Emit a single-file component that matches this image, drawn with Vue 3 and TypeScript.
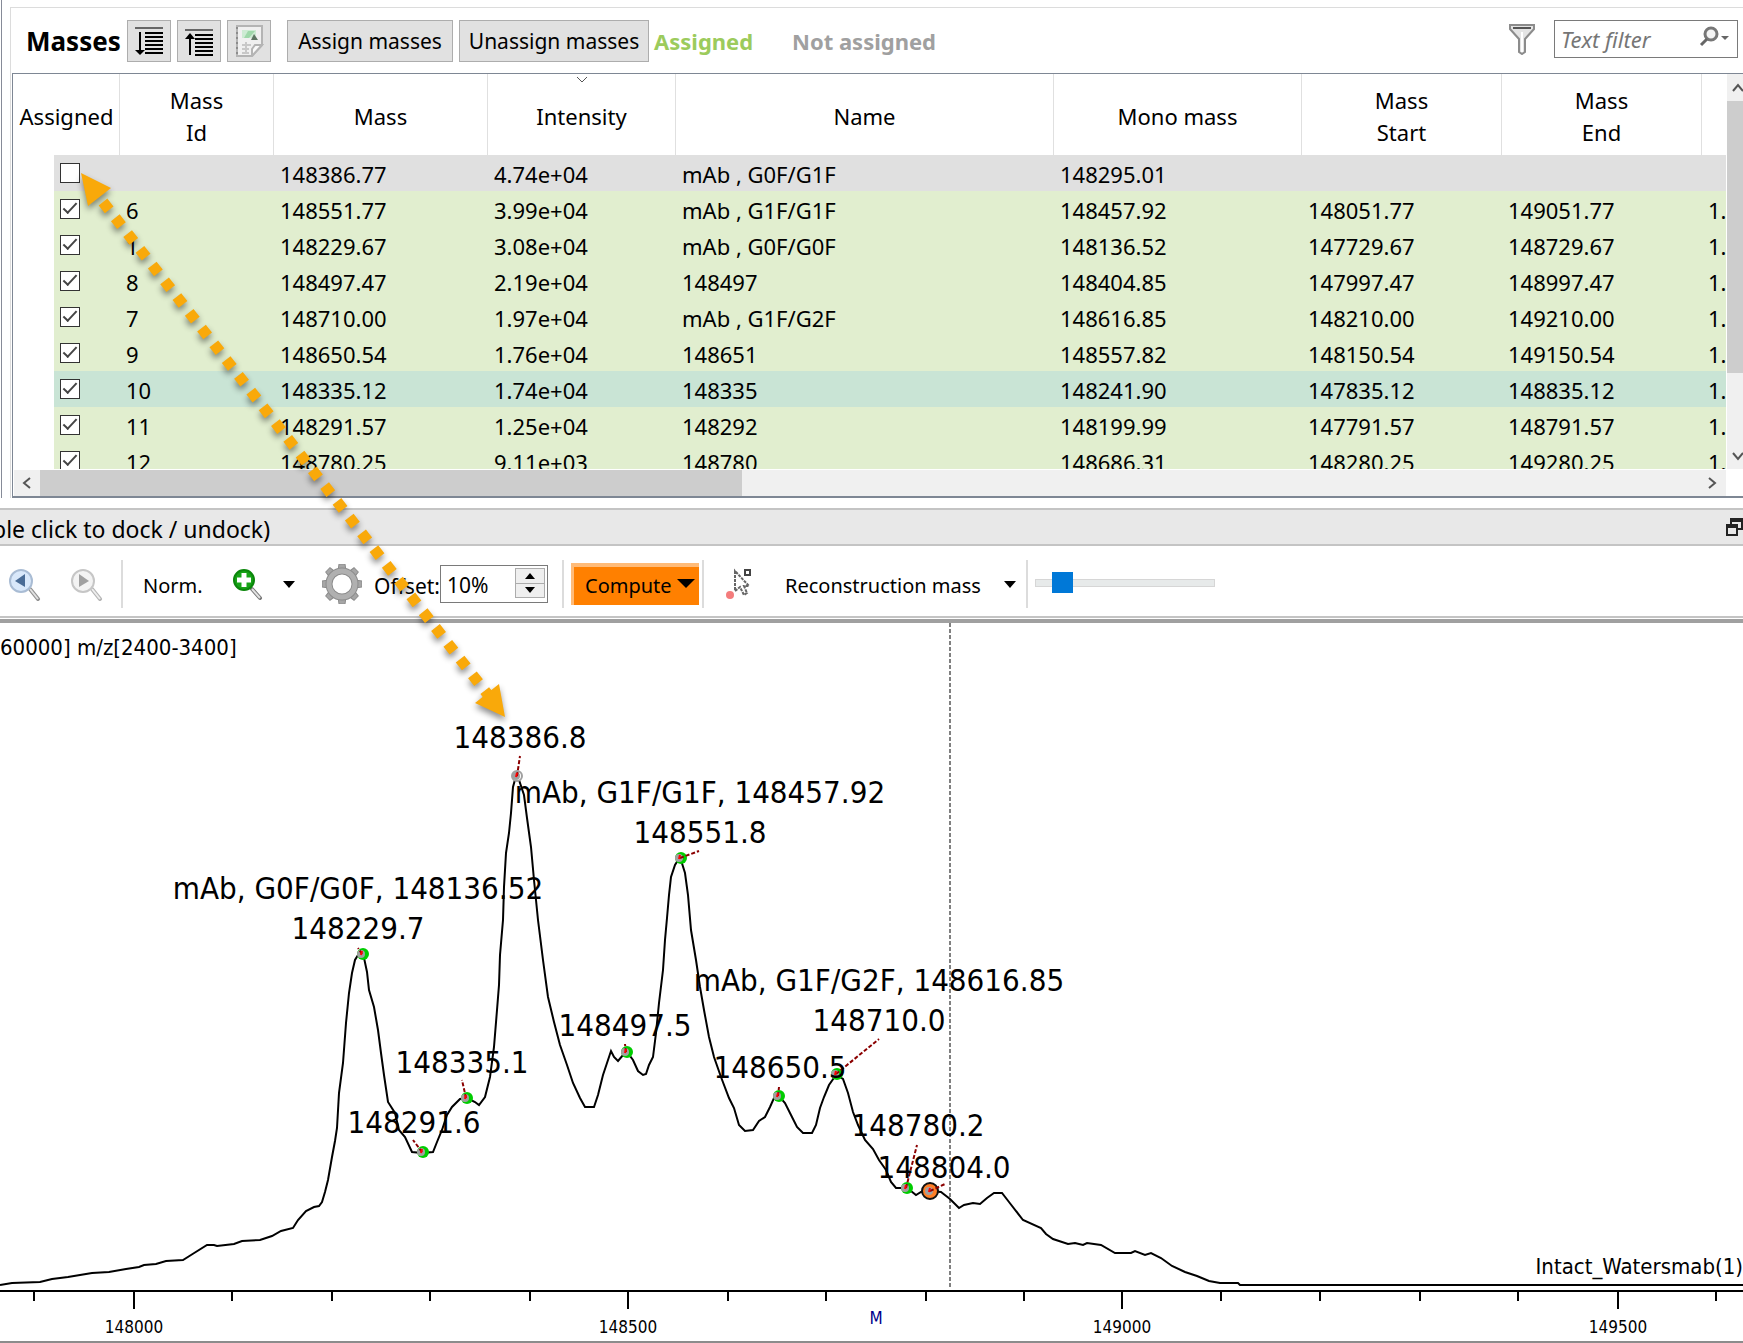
<script setup lang="ts">
import { ref } from 'vue'

interface MassRow {
  assigned: boolean
  id: string
  mass: string
  intensity: string
  name: string
  mono: string
  start: string
  end: string
  more: string
  state: 'unassigned' | 'assigned' | 'selected'
}

const columns = ['Assigned', 'Mass\nId', 'Mass', 'Intensity', 'Name', 'Mono mass', 'Mass\nStart', 'Mass\nEnd', '']

const rows = ref<MassRow[]>([
  { assigned: false, id: '', mass: '148386.77', intensity: '4.74e+04', name: 'mAb , G0F/G1F', mono: '148295.01', start: '', end: '', more: '', state: 'unassigned' },
  { assigned: true, id: '6', mass: '148551.77', intensity: '3.99e+04', name: 'mAb , G1F/G1F', mono: '148457.92', start: '148051.77', end: '149051.77', more: '1.', state: 'assigned' },
  { assigned: true, id: '1', mass: '148229.67', intensity: '3.08e+04', name: 'mAb , G0F/G0F', mono: '148136.52', start: '147729.67', end: '148729.67', more: '1.', state: 'assigned' },
  { assigned: true, id: '8', mass: '148497.47', intensity: '2.19e+04', name: '148497', mono: '148404.85', start: '147997.47', end: '148997.47', more: '1.', state: 'assigned' },
  { assigned: true, id: '7', mass: '148710.00', intensity: '1.97e+04', name: 'mAb , G1F/G2F', mono: '148616.85', start: '148210.00', end: '149210.00', more: '1.', state: 'assigned' },
  { assigned: true, id: '9', mass: '148650.54', intensity: '1.76e+04', name: '148651', mono: '148557.82', start: '148150.54', end: '149150.54', more: '1.', state: 'assigned' },
  { assigned: true, id: '10', mass: '148335.12', intensity: '1.74e+04', name: '148335', mono: '148241.90', start: '147835.12', end: '148835.12', more: '1.', state: 'selected' },
  { assigned: true, id: '11', mass: '148291.57', intensity: '1.25e+04', name: '148292', mono: '148199.99', start: '147791.57', end: '148791.57', more: '1.', state: 'assigned' },
  { assigned: true, id: '12', mass: '148780.25', intensity: '9.11e+03', name: '148780', mono: '148686.31', start: '148280.25', end: '149280.25', more: '1.', state: 'assigned' },
])

const filterText = ref('')
const offset = ref('10%')
const zoomLevel = ref(10)

// Spectrum trace, in chart units.
const trace =
  '0,662 12,660 40,659 52,656 68,654 80,652 92,650 109,649 126,646 139,644 144,642 156,641 166,638 183,637 191,632 207,622 214,622 217,623 234,621 242,618 260,617 272,613 281,608 293,605 298,597 306,588 314,584 319,583 322,579 325,569 328,557 332,534 335,518 337,505 339,470 343,440 346,400 349,370 352,350 355,337 358,332 363,330 367,349 369,367 374,384 378,407 381,430 384,452 388,479 395,490 399,507 405,514 412,529 422,530 433,529 437,519 442,507 447,492 452,484 460,476 467,475 475,479 479,482 485,474 490,454 494,424 497,387 499,362 500,332 503,297 504,264 506,230 509,210 511,190 513,164 516,153 519,157 524,172 527,195 531,224 534,257 538,297 543,337 548,374 554,399 560,422 567,442 573,460 580,475 585,484 594,484 598,472 603,452 607,440 611,428 614,434 618,438 623,432 627,429 633,437 638,448 643,452 646,451 649,442 653,434 656,410 659,380 663,347 665,317 667,295 669,272 671,254 675,242 680,234 685,250 688,272 691,307 696,337 700,364 704,387 709,414 714,434 721,454 729,475 734,485 739,502 745,508 753,507 759,498 765,494 770,484 774,475 779,473 785,480 791,492 797,504 803,510 812,510 816,502 820,485 824,474 829,462 836,452 843,456 848,470 853,489 858,502 865,517 873,526 879,537 886,547 891,559 896,565 906,565 911,568 916,572 921,569 930,568 941,569 950,576 959,585 964,582 973,580 980,581 987,575 994,570 1002,570 1009,579 1023,597 1041,605 1046,611 1053,616 1068,621 1075,620 1083,622 1087,620 1101,622 1115,630 1131,630 1135,628 1145,632 1151,630 1161,635 1172,643 1185,649 1197,653 1209,658 1220,660 1238,660 1240,662 1743,662'

const labels = [
  { x: 520, y: 125, text: '148386.8' },
  { x: 700, y: 180, text: 'mAb, G1F/G1F, 148457.92' },
  { x: 700, y: 220, text: '148551.8' },
  { x: 358, y: 276, text: 'mAb, G0F/G0F, 148136.52' },
  { x: 358, y: 316, text: '148229.7' },
  { x: 879, y: 368, text: 'mAb, G1F/G2F, 148616.85' },
  { x: 879, y: 408, text: '148710.0' },
  { x: 625, y: 413, text: '148497.5' },
  { x: 462, y: 450, text: '148335.1' },
  { x: 780, y: 455, text: '148650.5' },
  { x: 414, y: 510, text: '148291.6' },
  { x: 918, y: 513, text: '148780.2' },
  { x: 944, y: 555, text: '148804.0' },
]

// Peak markers with the free end of their leader line.
const peaks = [
  { x: 517, y: 153, lx: 520, ly: 133, kind: 'plain' },
  { x: 680, y: 235, lx: 699, ly: 228, kind: 'green' },
  { x: 362, y: 331, lx: 358, ly: 325, kind: 'green' },
  { x: 626, y: 429, lx: 625, ly: 421, kind: 'green' },
  { x: 466, y: 475, lx: 462, ly: 457, kind: 'green' },
  { x: 778, y: 473, lx: 779, ly: 464, kind: 'green' },
  { x: 422, y: 529, lx: 413, ly: 517, kind: 'green' },
  { x: 836, y: 451, lx: 879, ly: 416, kind: 'green' },
  { x: 906, y: 565, lx: 917, ly: 522, kind: 'green' },
  { x: 930, y: 568, lx: 945, ly: 561, kind: 'orange' },
]

const minorTicks = [34, 232, 332, 430, 530, 728, 826, 926, 1024, 1221, 1320, 1420, 1518, 1716]
const majorTicks = [
  { x: 134, text: '148000' },
  { x: 628, text: '148500' },
  { x: 1122, text: '149000' },
  { x: 1618, text: '149500' },
]
</script>

<template>
  <main class="app">
    <section class="masses">
      <div class="group">
        <header class="bar">
          <h1 class="title">Masses</h1>
          <button class="btn icon" aria-label="Sort descending">
            <svg width="30" height="30" viewBox="0 0 30 30">
              <path d="M1 2H29" stroke="#666" stroke-width="2" />
              <path d="M11 7H29M11 11H29M11 15H29M11 19H29M11 23H29M11 27H29M6 6V28" stroke="#000" stroke-width="2" />
              <path d="M1 24H11L6 29Z" />
            </svg>
          </button>
          <button class="btn icon" aria-label="Sort ascending">
            <svg width="30" height="30" viewBox="0 0 30 30">
              <path d="M1 4H29" stroke="#666" stroke-width="2" />
              <path d="M11 9H29M11 13H29M11 17H29M11 21H29M11 25H29M11 29H29M6 9V29" stroke="#000" stroke-width="2" />
              <path d="M1 13H11L6 7Z" />
            </svg>
          </button>
          <button class="btn icon" aria-label="Export">
            <svg width="30" height="32" viewBox="0 0 30 32">
              <path d="M3 1H28V20L18 31H3Z" fill="#f0f0f0" stroke="#b4b4b4" stroke-width="2" />
              <path d="M28 20L18 31V24L21 20Z" fill="#fafafa" stroke="#b4b4b4" stroke-width="2" />
              <path d="M3 2V31" stroke="#8c8c8c" stroke-width="2" stroke-dasharray="2 3" />
              <path d="M8 20H17M8 24H15M8 28H15M12 17V29" stroke="#c8c8c8" stroke-width="2" />
              <path d="M8 5H22V13H8Z" fill="#cdebd3" />
              <path d="M10 13L14 6H21L15 13Z" fill="#9fd8aa" />
              <path d="M20 9L24 15H17Z" fill="#5d7562" />
            </svg>
          </button>
          <button class="btn assign">Assign masses</button>
          <button class="btn unassign">Unassign masses</button>
          <span class="legend on">Assigned</span>
          <span class="legend off">Not assigned</span>
          <svg class="funnel" width="26" height="32" viewBox="0 0 26 32">
            <path d="M1 2H25V6L16 16V29L13 31L10 29V16L1 6Z" fill="#e4e4e4" stroke="#8c8c8c" stroke-width="2" />
            <path d="M4 5H22" stroke="#555" stroke-width="2" />
            <path d="M13 9V29" stroke="#fff" stroke-width="2" />
          </svg>
          <label class="filter">
            <input v-model="filterText" type="text" placeholder="Text filter" aria-label="Text filter" />
            <svg width="30" height="22" viewBox="0 0 30 22">
              <circle cx="12" cy="8" r="6" fill="#f4f4f4" stroke="#777" stroke-width="3" />
              <path d="M8 13L2 19" stroke="#666" stroke-width="3" />
              <path d="M22 10H30L26 14Z" fill="#666" />
            </svg>
          </label>
        </header>

        <div class="frame">
          <div class="viewport">
            <table>
              <colgroup>
                <col class="c-assigned" /><col class="c-id" /><col class="c-mass" /><col class="c-intensity" />
                <col /><col class="c-mono" /><col class="c-range" /><col class="c-range" /><col class="c-more" />
              </colgroup>
              <thead>
                <tr>
                  <th v-for="(column, i) in columns" :key="i" scope="col">
                    <svg v-if="column === 'Intensity'" class="sort" width="12" height="7" viewBox="0 0 12 7">
                      <path d="M1 1L6 6L11 1" fill="none" stroke="#555" />
                    </svg>
                    <span>{{ column }}</span>
                  </th>
                </tr>
              </thead>
              <tbody>
                <tr v-for="row in rows" :key="row.mass" :class="row.state">
                  <td class="check"><input v-model="row.assigned" type="checkbox" :aria-label="`Assign ${row.mass}`" /></td>
                  <td>{{ row.id }}</td>
                  <td>{{ row.mass }}</td>
                  <td>{{ row.intensity }}</td>
                  <td>{{ row.name }}</td>
                  <td>{{ row.mono }}</td>
                  <td>{{ row.start }}</td>
                  <td>{{ row.end }}</td>
                  <td>{{ row.more }}</td>
                </tr>
              </tbody>
            </table>
          </div>
          <div class="vscroll">
            <button class="arrow" aria-label="Scroll up">
              <svg width="12" height="12" viewBox="0 0 12 12"><path d="M1 9L6 3L11 9" fill="none" stroke="#555" stroke-width="2" /></svg>
            </button>
            <div class="thumb"></div>
            <button class="arrow" aria-label="Scroll down">
              <svg width="12" height="12" viewBox="0 0 12 12"><path d="M1 3L6 9L11 3" fill="none" stroke="#555" stroke-width="2" /></svg>
            </button>
          </div>
          <div class="hscroll">
            <button class="arrow" aria-label="Scroll left">
              <svg width="12" height="12" viewBox="0 0 12 12"><path d="M9 1L3 6L9 11" fill="none" stroke="#555" stroke-width="2" /></svg>
            </button>
            <div class="thumb"></div>
            <button class="arrow" aria-label="Scroll right">
              <svg width="12" height="12" viewBox="0 0 12 12"><path d="M3 1L9 6L3 11" fill="none" stroke="#555" stroke-width="2" /></svg>
            </button>
          </div>
        </div>
      </div>
    </section>

    <section class="dock">
      <header class="dockbar">
        <span class="docktitle">ble click to dock / undock)</span>
        <button class="restore" aria-label="Undock">
          <svg width="17" height="18" viewBox="0 0 17 18">
            <path d="M5 6V1H16V11H12M5 3H16" fill="none" stroke="#222" stroke-width="2" />
            <path d="M1 7H11V17H1ZM1 9H11" fill="none" stroke="#222" stroke-width="2" />
          </svg>
        </button>
      </header>

      <div class="tools">
        <button class="tool back" aria-label="Previous zoom">
          <svg width="32" height="34" viewBox="0 0 32 34">
            <path d="M21 22L29 32" stroke="#8f8f8f" stroke-width="4" stroke-linecap="round" />
            <path d="M21 22L29 32" stroke="#e2e2e2" stroke-width="2" />
            <circle cx="12" cy="14" r="11" fill="#d9e8fa" stroke="#a9bcd4" stroke-width="2" />
            <path d="M16 7V20L6 14Z" fill="#4a6c96" />
          </svg>
        </button>
        <button class="tool next" aria-label="Next zoom">
          <svg width="32" height="34" viewBox="0 0 32 34">
            <path d="M21 22L29 32" stroke="#b4b4b4" stroke-width="4" stroke-linecap="round" />
            <path d="M21 22L29 32" stroke="#eee" stroke-width="2" />
            <circle cx="12" cy="14" r="11" fill="#f3f3f3" stroke="#c6c6c6" stroke-width="2" />
            <path d="M8 7V20L18 14Z" fill="#a0a0a0" />
          </svg>
        </button>
        <i class="sep"></i>
        <button class="tool norm">Norm.</button>
        <button class="tool plus" aria-label="Zoom in">
          <svg width="30" height="34" viewBox="0 0 30 34">
            <path d="M19 22L27 31" stroke="#777" stroke-width="4" stroke-linecap="round" />
            <path d="M19 22L27 31" stroke="#e2e2e2" stroke-width="2" />
            <circle cx="11" cy="13" r="10" fill="#17a317" stroke="#0b860b" stroke-width="2" />
            <path d="M11 6V20M4 13H18" stroke="#fff" stroke-width="5" />
          </svg>
        </button>
        <button class="tool drop" aria-label="Zoom options"><svg width="12" height="7" viewBox="0 0 12 7"><path d="M0 0H12L6 7Z" /></svg></button>
        <button class="tool gear" aria-label="Settings">
          <svg width="40" height="40" viewBox="-20 -20 40 40">
            <path v-for="n in 8" :key="n" d="M-4 -13L-3 -20H3L4 -13Z" :transform="`rotate(${n * 45})`" fill="#a6a6a6" stroke="#8c8c8c" />
            <circle r="13" fill="none" stroke="#8c8c8c" stroke-width="7" />
            <circle r="13" fill="none" stroke="#b0b0b0" stroke-width="5" />
          </svg>
        </button>
        <label class="offset" for="offset">Offset:</label>
        <div class="spin">
          <input id="offset" v-model="offset" type="text" />
          <div class="steps">
            <button aria-label="Increase"><svg width="10" height="6" viewBox="0 0 10 6"><path d="M0 6H10L5 0Z" /></svg></button>
            <button aria-label="Decrease"><svg width="10" height="6" viewBox="0 0 10 6"><path d="M0 0H10L5 6Z" /></svg></button>
          </div>
        </div>
        <i class="sep s2"></i>
        <button class="compute">Compute<svg width="18" height="9" viewBox="0 0 18 9"><path d="M0 0H18L9 9Z" /></svg></button>
        <i class="sep s3"></i>
        <button class="tool pick" aria-label="Pick peak">
          <svg width="26" height="32" viewBox="0 0 26 32">
            <path d="M9 3V23L14 19L18 27L21 25L18 18H23Z" fill="#fff" stroke="#666" stroke-width="2" stroke-dasharray="3 1" />
            <rect x="19" y="2" width="5" height="5" fill="#fff" stroke="#444" stroke-width="2" />
            <circle cx="4" cy="27" r="4" fill="#f47c7c" />
          </svg>
        </button>
        <button class="tool recon"><span>Reconstruction mass</span><svg width="12" height="7" viewBox="0 0 12 7"><path d="M0 0H12L6 7Z" /></svg></button>
        <i class="sep s4"></i>
        <input v-model="zoomLevel" class="slider" type="range" min="0" max="100" aria-label="Zoom level" />
      </div>

      <svg class="chart" viewBox="0 0 1743 718" role="img" aria-label="Reconstructed mass spectrum">
        <text class="note" x="0" y="32">60000] m/z[2400-3400]</text>
        <path class="cursor" d="M950 0V664" />
        <polyline class="trace" :points="trace" />
        <g v-for="(p, i) in peaks" :key="i">
          <circle v-if="p.kind === 'green'" :cx="p.x + 1" :cy="p.y" r="6" fill="#0c0" />
          <circle v-if="p.kind === 'orange'" :cx="p.x" :cy="p.y" r="8" fill="#ff7f27" stroke="#111" stroke-width="2" />
          <circle v-if="p.kind === 'plain'" :cx="p.x" :cy="p.y" r="5" fill="#fff" stroke="#a0a0a0" stroke-width="2" />
          <circle :cx="p.x - 1" :cy="p.y" r="4" fill="#a0a0a0" />
          <path class="leader" :d="`M${p.x} ${p.y}L${p.lx} ${p.ly}`" />
          <path class="stub" :d="`M${p.x - 1} ${p.y + 1}L${p.x} ${p.y - 3}`" />
        </g>
        <text v-for="l in labels" :key="l.text" class="label" :x="l.x" :y="l.y">{{ l.text }}</text>
        <text class="note end" x="1743" y="651">Intact_Watersmab(1)</text>
        <path class="axis" d="M0 668H1743" />
        <path v-for="x in minorTicks" :key="x" class="axis" :d="`M${x} 668V678`" />
        <g v-for="t in majorTicks" :key="t.x">
          <path class="axis" :d="`M${t.x} 668V686`" />
          <text class="tick" :x="t.x" :y="710">{{ t.text }}</text>
        </g>
        <text class="tick unit" x="876" y="701">M</text>
      </svg>
    </section>

    <svg class="pointer" width="560" height="740" viewBox="0 0 560 740" aria-hidden="true">
      <g class="shape">
        <path d="M103 202L489 696" stroke="#f9a90a" stroke-width="11" stroke-dasharray="10 10" />
        <path d="M81 173L111 188L88 206ZM505 717L499 684L475 703Z" fill="#f9a90a" />
      </g>
    </svg>
  </main>
</template>

<style>
body {
  margin: 0;
  background: #fff;
}
</style>

<style scoped>
.app {
  position: relative;
  overflow: hidden;
  color: #000;
  font-family: 'Noto Sans', 'Open Sans', sans-serif;
  font-size: 22px;
  line-height: 32px;
}
button,
input {
  margin: 0;
  padding: 0;
  border: 0;
  background: none;
  color: inherit;
  font: inherit;
}
svg {
  display: block;
  flex: none;
}
.masses {
  margin-left: 1px;
  padding: 7px 0 0 8px;
  border-left: 1px solid #868b98;
}
.group {
  border: solid #dcdcdc;
  border-width: 1px 0 0 1px;
}
.bar {
  display: flex;
  align-items: center;
  height: 65px;
  padding: 0 5px 0 15px;
  box-sizing: border-box;
  white-space: nowrap;
}
.title {
  width: 101px;
  margin: 0;
  font-size: 26px;
  font-weight: 700;
}
.btn {
  flex: none;
  height: 42px;
  border: 1px solid #adadad;
  background: #e1e1e1;
  font-size: 21px;
}
.btn.icon {
  display: flex;
  align-items: center;
  justify-content: center;
  width: 44px;
  margin-right: 6px;
}
.assign {
  width: 166px;
  margin: 0 6px 0 10px;
}
.unassign {
  width: 190px;
}
.legend {
  font-weight: 700;
}
.on {
  width: 131px;
  margin-left: 5px;
  color: #9ccb5c;
}
.off {
  margin-left: 7px;
  color: #a0a0a0;
}
.funnel {
  margin: 0 19px 4px auto;
}
.filter {
  display: flex;
  align-items: center;
  width: 184px;
  height: 38px;
  margin-bottom: 4px;
  box-sizing: border-box;
  border: 1px solid #7a7a7a;
  padding: 0 8px 0 6px;
}
.filter input {
  flex: 1;
  min-width: 0;
  outline: 0;
}
.filter input::placeholder {
  color: #767676;
  font-style: italic;
}
.filter svg {
  margin-bottom: 4px;
}
.frame {
  display: grid;
  grid-template-columns: minmax(0, 1fr) 16px;
  grid-template-rows: 395px 26px;
  column-gap: 1px;
  row-gap: 1px;
  margin-left: 1px;
  padding-left: 1px;
  border: solid #7e8794;
  border-width: 1px 0 2px 1px;
}
.viewport {
  overflow: hidden;
}
table {
  width: 100%;
  table-layout: fixed;
  border-collapse: collapse;
}
.c-assigned { width: 106px; }
.c-id { width: 154px; }
.c-mass { width: 214px; }
.c-intensity { width: 188px; }
.c-mono { width: 248px; }
.c-range { width: 200px; }
.c-more { width: 24px; }
th {
  position: relative;
  height: 81px;
  padding: 0;
  font-weight: 400;
}
th span {
  display: flex;
  align-items: center;
  justify-content: center;
  height: 81px;
  padding-top: 2px;
  box-sizing: border-box;
  overflow: hidden;
  border-right: 1px solid #e0e0e0;
  white-space: pre;
}
th:last-child span {
  border: 0;
}
.sort {
  position: absolute;
  top: 2px;
  left: calc(50% - 6px);
}
td {
  height: 34px;
  padding: 2px 0 0 6px;
  background: var(--row);
  line-height: 34px;
  white-space: nowrap;
}
.unassigned { --row: #e0e0e0; }
.assigned { --row: #e1eecf; }
.selected { --row: #c9e4d5; }
td.check {
  height: 36px;
  padding: 0 0 0 46px;
  background: linear-gradient(to right, #fff 40px, var(--row) 40px);
}
.check input {
  display: block;
  width: 20px;
  height: 20px;
  border: 1px solid #333;
  background: #fff;
  appearance: none;
}
.check input:checked::before {
  content: '';
  display: block;
  width: 12px;
  height: 5px;
  margin: 3px 0 0 2px;
  border: solid #444;
  border-width: 0 0 2px 2px;
  transform: rotate(-47deg);
}
.vscroll {
  display: flex;
  flex-direction: column;
  overflow: hidden;
  background: #f0f0f0;
}
.arrow {
  display: flex;
  flex: none;
  align-items: center;
  justify-content: center;
}
.vscroll .arrow {
  width: 22px;
  height: 27px;
}
.vscroll .thumb {
  height: 272px;
  background: #cdcdcd;
}
.vscroll .arrow:last-child {
  margin-top: auto;
}
.hscroll {
  display: flex;
  height: 26px;
  background: #f0f0f0;
}
.hscroll .arrow {
  width: 26px;
}
.hscroll .thumb {
  width: 41%;
  background: #cdcdcd;
}
.hscroll .arrow:last-child {
  width: 28px;
  margin-left: auto;
}
.dockbar {
  display: flex;
  align-items: center;
  justify-content: space-between;
  height: 38px;
  margin-top: 10px;
  box-sizing: border-box;
  border: solid #c4c4c4;
  border-width: 2px 0;
  background: #e8e8e8;
}
.docktitle {
  padding-top: 4px;
  font-size: 23px;
  text-indent: -8px;
}
.tools {
  display: flex;
  align-items: center;
  height: 72px;
  padding: 6px 0 0 9px;
  box-sizing: border-box;
  border-bottom: 2px solid #c4c4c4;
  font-size: 20px;
  white-space: nowrap;
}
.tool {
  flex: none;
}
.next { margin-left: 30px; }
.sep {
  flex: none;
  width: 2px;
  height: 48px;
  margin-left: 18px;
  background: #dcdcdc;
}
.norm,
.offset,
.recon span {
  padding-top: 4px;
}
.norm { width: 60px; margin-left: 20px; text-align: left; }
.plus { margin-left: 30px; }
.drop { margin-left: 20px; }
.gear { margin-left: 27px; }
.offset { width: 66px; margin-left: 12px; font-size: 21px; }
.spin {
  display: flex;
  align-items: center;
  width: 108px;
  height: 38px;
  padding: 0 2px 0 6px;
  box-sizing: border-box;
  border: 1px solid #7a7a7a;
}
.spin input {
  flex: 1;
  min-width: 0;
  padding-top: 2px;
  font-size: 21px;
}
.steps {
  display: flex;
  flex-direction: column;
  width: 30px;
  height: 30px;
  margin-bottom: 2px;
  box-sizing: border-box;
  border: 1px solid #acacac;
  background: #efefef;
}
.steps button {
  display: flex;
  flex: 1;
  align-items: center;
  justify-content: center;
}
.steps button + button {
  border-top: 1px solid #acacac;
}
.s2 { margin-left: 14px; }
.compute {
  display: flex;
  flex: none;
  align-items: center;
  justify-content: space-between;
  width: 128px;
  height: 42px;
  margin-left: 7px;
  padding: 0 4px 0 11px;
  box-sizing: border-box;
  border: solid #ffbb78;
  border-width: 4px 0 0 3px;
  background: #ff8000;
}
.compute svg { margin-bottom: 6px; }
.s3 { margin-left: 3px; }
.pick { margin-left: 22px; }
.recon {
  display: flex;
  align-items: center;
  justify-content: space-between;
  width: 231px;
  margin-left: 33px;
}
.s4 { margin-left: 10px; }
.slider {
  width: 180px;
  height: 22px;
  margin: 0 0 2px 7px;
  appearance: none;
}
.slider::-webkit-slider-runnable-track {
  height: 8px;
  box-sizing: border-box;
  border: 1px solid #d6d6d6;
  background: #e7eaea;
}
.slider::-webkit-slider-thumb {
  width: 21px;
  height: 21px;
  margin-top: -8px;
  background: #0078d7;
  appearance: none;
}
.chart {
  width: 100%;
  height: auto;
  box-sizing: content-box;
  margin-top: 1px;
  border-top: 4px solid #a0a0a0;
  border-bottom: 2px solid #8c8c8c;
  font-family: 'DejaVu Sans Condensed', 'Noto Sans', sans-serif;
}
.label {
  font-size: 31px;
  text-anchor: middle;
}
.note {
  font-size: 22px;
}
.end {
  text-anchor: end;
}
.tick {
  font-size: 17px;
  text-anchor: middle;
}
.unit {
  fill: #00008b;
}
.trace {
  fill: none;
  stroke: #000;
  stroke-width: 2;
}
.axis {
  stroke: #000;
  stroke-width: 2;
}
.cursor {
  stroke: #808080;
  stroke-width: 2;
  stroke-dasharray: 4 2;
}
.leader {
  stroke: #8b0000;
  stroke-width: 2;
  stroke-dasharray: 4 2;
}
.stub {
  stroke: #f00;
  stroke-width: 2;
}
.pointer {
  position: absolute;
  top: 0;
  left: 0;
  pointer-events: none;
}
.shape {
  filter: drop-shadow(0 4px 3px rgba(0, 0, 0, 0.45));
}
</style>
